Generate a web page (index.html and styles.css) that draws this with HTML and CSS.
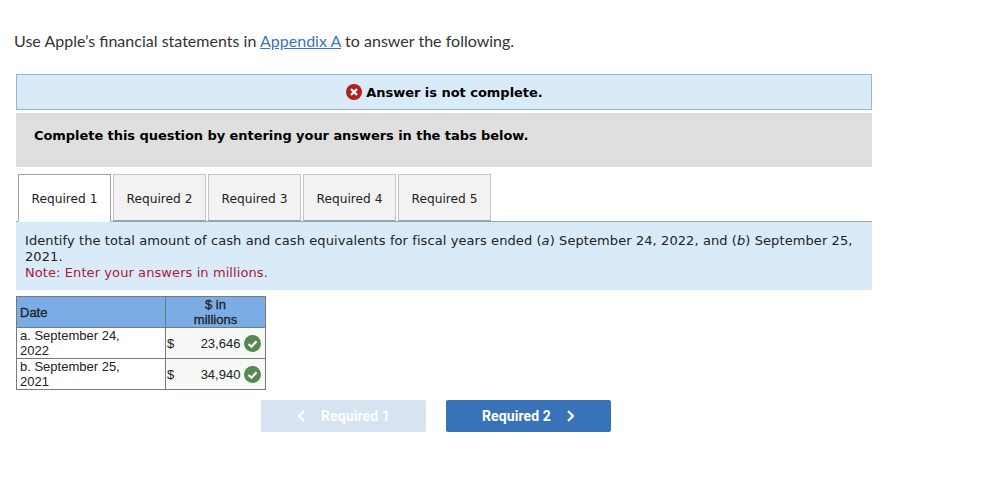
FILE: index.html
```html
<!DOCTYPE html>
<html lang="en">
<head>
    <meta charset="UTF-8">
    <title>Question</title>
    <link rel="stylesheet" href="styles.css">
</head>
<body>
    <p class="intro">Use Apple’s financial statements in <a href="#">Appendix A</a> to answer the following.</p>

    <div class="status">
        <svg class="status-icon" width="16" height="16" viewBox="0 0 16 16">
            <circle cx="8" cy="8" r="8" fill="#b0201f"/>
            <path d="M5 5l6 6M11 5l-6 6" stroke="#fff" stroke-width="2.4"/>
        </svg>
        <span>Answer is not complete.</span>
    </div>

    <div class="instructions">Complete this question by entering your answers in the tabs below.</div>

    <div class="tabs">
        <div class="tab active">Required 1</div>
        <div class="tab">Required 2</div>
        <div class="tab">Required 3</div>
        <div class="tab">Required 4</div>
        <div class="tab">Required 5</div>
    </div>

    <div class="panel">
        Identify the total amount of cash and cash equivalents for fiscal years ended (<i>a</i>) September 24, 2022, and (<i>b</i>) September 25, 2021.
        <div class="note">Note: Enter your answers in millions.</div>
    </div>

    <table class="answers">
        <colgroup>
            <col class="col-date">
            <col class="col-cur">
            <col>
        </colgroup>
        <tr>
            <th class="date-head">Date</th>
            <th class="amount-head" colspan="2">$ in<br>millions</th>
        </tr>
        <tr>
            <td class="date">a. September 24, 2022</td>
            <td class="cur">$</td>
            <td class="amount">23,646
                <svg class="check" width="17" height="17" viewBox="0 0 17 17">
                    <circle cx="8.5" cy="8.5" r="8.5" fill="#55894f"/>
                    <path d="M4.5 9l3 2.8 5-5.6" fill="none" stroke="#fff" stroke-width="2.2"/>
                </svg>
            </td>
        </tr>
        <tr>
            <td class="date">b. September 25, 2021</td>
            <td class="cur">$</td>
            <td class="amount">34,940
                <svg class="check" width="17" height="17" viewBox="0 0 17 17">
                    <circle cx="8.5" cy="8.5" r="8.5" fill="#55894f"/>
                    <path d="M4.5 9l3 2.8 5-5.6" fill="none" stroke="#fff" stroke-width="2.2"/>
                </svg>
            </td>
        </tr>
    </table>

    <div class="nav-buttons">
        <a href="#" class="nav-btn disabled">
            <svg width="9" height="12" viewBox="0 0 9 12"><path d="M7 1L2 6l5 5" fill="none" stroke="#fff" stroke-width="2.2"/></svg>
            <span>Required 1</span>
        </a>
        <a href="#" class="nav-btn">
            <span>Required 2</span>
            <svg width="9" height="12" viewBox="0 0 9 12"><path d="M2 1l5 5-5 5" fill="none" stroke="#fff" stroke-width="2.2"/></svg>
        </a>
    </div>
</body>
</html>
```

FILE: styles.css
```css
body {
    margin: 0;
    padding: 0 16px;
    width: 856px;
    background: #fff;
    color: #000;
    font-family: "DejaVu Sans", Verdana, sans-serif;
    font-size: 13px;
}

.intro {
    margin: 0 0 0 -2px;
    padding-top: 31px;
    height: 43px;
    line-height: 20px;
    font-family: Lato, sans-serif;
    font-size: 16px;
    word-spacing: 0.1px;
    color: #333;
}

.intro a {
    color: #3a76b8;
}

.status {
    display: flex;
    justify-content: center;
    align-items: center;
    gap: 4px;
    height: 34px;
    background: #d9ebf9;
    border: 1px solid #8fb6dc;
    font-weight: bold;
    font-size: 13px;
    letter-spacing: -0.03px;
}

.status-icon {
    margin-left: 1px;
}

.instructions {
    margin-top: 3px;
    height: 54px;
    padding-left: 18px;
    box-sizing: border-box;
    padding-top: 15px;
    background: #dfdfdf;
    font-weight: bold;
    line-height: 16px;
    letter-spacing: -0.06px;
}

.tabs {
    display: flex;
    gap: 2px;
    margin-top: 7px;
    padding-left: 2px;
    border-bottom: 1px solid #a0a0a0;
}

.tab {
    width: 93px;
    height: 47px;
    box-sizing: border-box;
    margin-bottom: -1px;
    background: #f2f2f2;
    border: 1px solid #c4c4c4;
    border-bottom: 1px solid #a0a0a0;
    text-align: center;
    line-height: 48px;
    font-size: 12.2px;
    color: #222;
}

.tab.active {
    background: #fff;
    border-color: #a0a0a0;
    border-bottom-color: #fff;
    height: 48px;
}

.panel {
    height: 68px;
    box-sizing: border-box;
    padding: 11px 9px 0;
    background: #d9ebf9;
    line-height: 16px;
    letter-spacing: 0.085px;
    color: #222;
}

.note {
    color: #b0173a;
}

.answers {
    margin-top: 6px;
    width: 250px;
    border-collapse: collapse;
    table-layout: fixed;
    font-family: "Liberation Sans", Arial, sans-serif;
    font-size: 13px;
    line-height: 15px;
    color: #222;
}

.col-date {
    width: 149px;
}

.col-cur {
    width: 16px;
}

.answers th,
.answers td {
    border: 1px solid #7a7a7a;
    padding: 0 3px;
}

.answers th {
    height: 30px;
    background: #7aade6;
    font-weight: normal;
    -webkit-text-stroke: 0.3px #222;
}

.answers th.date-head {
    text-align: left;
}

.answers td.date {
    height: 30px;
    padding-right: 24px;
}

.answers td.cur {
    padding: 0 0 0 1px;
    border-right: none;
    background: #f6f9f6;
}

.answers td.amount {
    padding: 0 4px 0 0;
    border-left: none;
    background: #f6f9f6;
    text-align: right;
    white-space: nowrap;
}

.check {
    vertical-align: -4px;
}

.nav-buttons {
    display: flex;
    gap: 20px;
    margin-top: 10px;
    padding-left: 245px;
}

.nav-btn {
    display: flex;
    justify-content: center;
    align-items: center;
    gap: 15px;
    width: 165px;
    height: 32px;
    background: #3873b9;
    border-radius: 2px;
    color: #fff;
    font-family: Roboto, sans-serif;
    font-size: 14px;
    font-weight: bold;
    letter-spacing: 0.1px;
    text-decoration: none;
}

.nav-btn.disabled {
    background: #d7e3f1;
}
```
